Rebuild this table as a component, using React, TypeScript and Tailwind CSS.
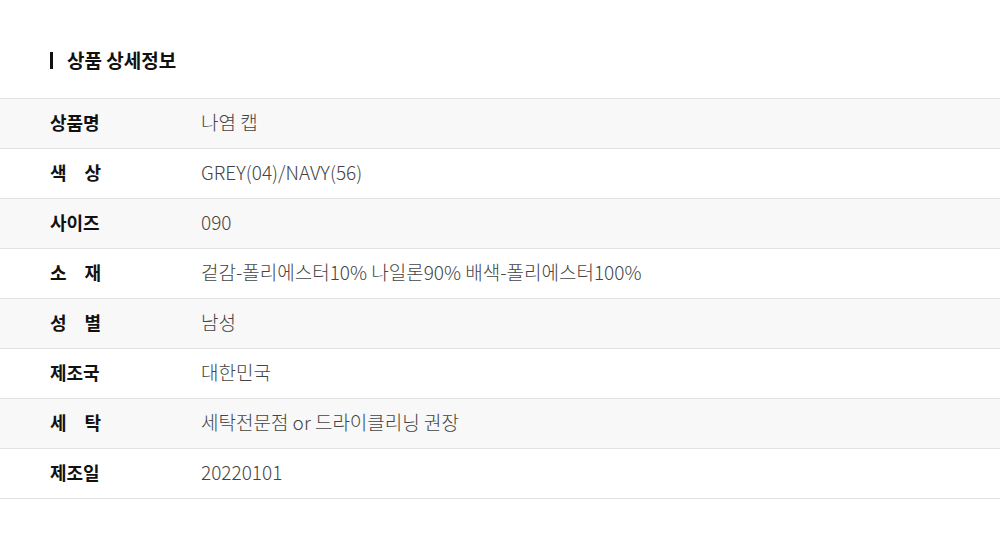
const rows: [string, string][] = [
  ["상품명", "나염 캡"],
  ["색상", "GREY(04)/NAVY(56)"],
  ["사이즈", "090"],
  ["소재", "겉감-폴리에스터10% 나일론90% 배색-폴리에스터100%"],
  ["성별", "남성"],
  ["제조국", "대한민국"],
  ["세탁", "세탁전문점 or 드라이클리닝 권장"],
  ["제조일", "20220101"],
];

export default function App() {
  return (
    <div className="w-[1000px] h-[548px] bg-white font-['Noto_Sans_CJK_KR','Noto_Sans',sans-serif]">
      <div className="pt-[47px] pl-[50px] h-[98px]">
        <h2 className="flex items-center gap-[14px] text-[19px] font-bold text-[#111] leading-[26px]">
          <span className="w-[3px] h-[17px] bg-[#111]" />
          상품 상세정보
        </h2>
      </div>
      <div className="border-t border-[#e2e2e2]">
        {rows.map(([label, value], i) => (
          <div
            key={label}
            className={`flex items-center h-[50px] pb-[3px] border-b border-[#e2e2e2] leading-[24px] ${i % 2 === 0 ? "bg-[#f8f8f8]" : "bg-white"}`}
          >
            <div className="w-[201px] pl-[50px] shrink-0">
              {label.length === 2 ? (
                <span className="flex justify-between w-[51px] text-[18px] font-bold text-[#111]">
                  <span>{label[0]}</span>
                  <span>{label[1]}</span>
                </span>
              ) : (
                <span className="text-[18px] font-bold text-[#111]">{label}</span>
              )}
            </div>
            <div className="text-[19px] font-light text-[#444]">{value}</div>
          </div>
        ))}
      </div>
    </div>
  );
}
